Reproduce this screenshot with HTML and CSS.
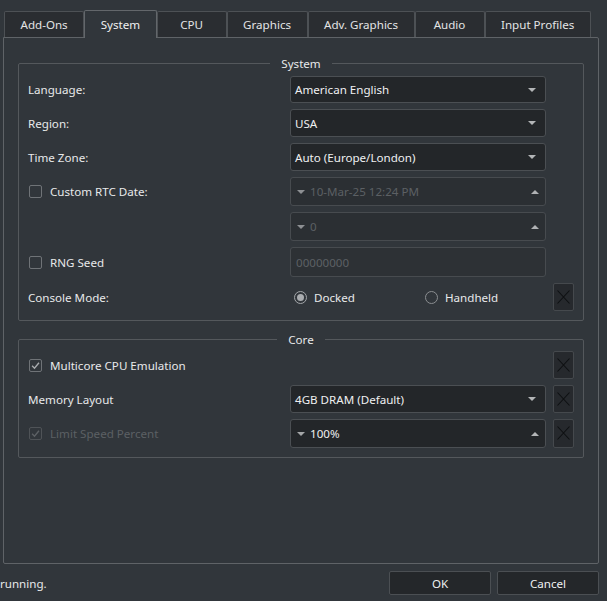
FILE: index.html
```html
<!DOCTYPE html>
<html>
<head>
<meta charset="utf-8">
<link rel="stylesheet" href="styles.css">
</head>
<body>
<div class="dialog">
  <div class="tabbar">
    <div class="tab">Add-Ons</div>
    <div class="tab selected">System</div>
    <div class="tab">CPU</div>
    <div class="tab">Graphics</div>
    <div class="tab">Adv. Graphics</div>
    <div class="tab">Audio</div>
    <div class="tab">Input Profiles</div>
  </div>
  <div class="pane">
    <fieldset class="group group-system">
      <legend>System</legend>
      <div class="rows rows-system">
        <div class="label">Language:</div>
        <div class="combo"><span>American English</span><i class="tri-down"></i></div>
        <div></div>

        <div class="label">Region:</div>
        <div class="combo"><span>USA</span><i class="tri-down"></i></div>
        <div></div>

        <div class="label">Time Zone:</div>
        <div class="combo"><span>Auto (Europe/London)</span><i class="tri-down"></i></div>
        <div></div>

        <div class="check"><span class="box"></span><span>Custom RTC Date:</span></div>
        <div class="spin disabled"><i class="tri-down small"></i><span class="spin-text">10-Mar-25 12:24 PM</span><i class="tri-up"></i></div>
        <div></div>

        <div></div>
        <div class="spin disabled"><i class="tri-down small"></i><span class="spin-text">0</span><i class="tri-up"></i></div>
        <div></div>

        <div class="check"><span class="box"></span><span>RNG Seed</span></div>
        <div class="lineedit disabled"><span>00000000</span></div>
        <div></div>

        <div class="label">Console Mode:</div>
        <div class="radios">
          <div class="radio"><span class="circle on"></span><span>Docked</span></div>
          <div class="radio"><span class="circle"></span><span>Handheld</span></div>
        </div>
        <div class="xbtn"><svg viewBox="0 0 21 27" width="21" height="27"><path d="M4.5 7.5 L16.5 20.5 M16.5 7.5 L4.5 20.5" /></svg></div>
      </div>
    </fieldset>

    <fieldset class="group group-core">
      <legend>Core</legend>
      <div class="rows rows-core">
        <div class="check"><span class="box checked"><svg viewBox="0 0 13 13" width="13" height="13"><path d="M2.5 6.8 L5.3 9.6 L10.6 3.2" /></svg></span><span>Multicore CPU Emulation</span></div>
        <div></div>
        <div class="xbtn"><svg viewBox="0 0 21 27" width="21" height="27"><path d="M4.5 7.5 L16.5 20.5 M16.5 7.5 L4.5 20.5" /></svg></div>

        <div class="label">Memory Layout</div>
        <div class="combo"><span>4GB DRAM (Default)</span><i class="tri-down"></i></div>
        <div class="xbtn"><svg viewBox="0 0 21 27" width="21" height="27"><path d="M4.5 7.5 L16.5 20.5 M16.5 7.5 L4.5 20.5" /></svg></div>

        <div class="check disabled-text"><span class="box checked dim"><svg viewBox="0 0 13 13" width="13" height="13"><path d="M2.5 6.8 L5.3 9.6 L10.6 3.2" /></svg></span><span>Limit Speed Percent</span></div>
        <div class="spin"><i class="tri-down small"></i><span class="spin-text">100%</span><i class="tri-up"></i></div>
        <div class="xbtn"><svg viewBox="0 0 21 27" width="21" height="27"><path d="M4.5 7.5 L16.5 20.5 M16.5 7.5 L4.5 20.5" /></svg></div>
      </div>
    </fieldset>
  </div>
  <div class="footer">
    <div class="status">running.</div>
    <div class="buttons">
      <button class="btn">OK</button>
      <button class="btn">Cancel</button>
    </div>
  </div>
</div>
</body>
</html>
```

FILE: styles.css
```css
* { box-sizing: border-box; }

html, body {
  margin: 0;
  padding: 0;
  background: #31363b;
}

body {
  font-family: "Noto Sans", "Open Sans", sans-serif;
  font-size: 11.6px;
  color: #e8e9ea;
  width: 607px;
  height: 601px;
  overflow: hidden;
}

.dialog {
  padding-top: 10px;
}

/* Tabs */
.tabbar {
  display: flex;
  align-items: flex-end;
  height: 27px;
  padding-left: 4px;
}

.tab {
  height: 26px;
  min-width: 70px;
  padding: 0 15.5px;
  display: flex;
  align-items: center;
  justify-content: center;
  background: #2a2d31;
  border: 1px solid #4d5155;
  border-bottom: none;
  border-radius: 2px 2px 0 0;
  color: #e3e4e5;
  white-space: nowrap;
}

.tab.selected {
  height: 28px;
  margin-bottom: -1px;
  background: #31363b;
  border-color: #63676b;
  position: relative;
  z-index: 1;
  color: #eff0f1;
}

/* Pane */
.pane {
  margin: 0 8px 0 3px;
  height: 527px;
  border: 1px solid #5f6367;
  border-radius: 0 2px 2px 2px;
  padding: 18px 14px 0 14px;
}

.group {
  margin: 0;
  border: 1px solid #54585c;
  border-radius: 2px;
  padding: 5px 9px 9px 9px;
  min-width: 0;
}

.group legend {
  margin: 0 auto;
  padding: 0 11px;
  line-height: 15px;
  color: #e8e9ea;
}

.group-core {
  margin-top: 11px;
  padding-top: 4px;
}

.rows {
  display: grid;
  grid-template-columns: 1fr 256px 21px;
  column-gap: 7px;
  row-gap: 6px;
  align-items: center;
}

.rows-system {
  grid-template-rows: 27px 28px 28px 29px 29px 30px 28px;
}

.rows-core {
  grid-template-rows: 28px 28px 29px;
}

.rows > * {
  height: 100%;
}

.label {
  display: flex;
  align-items: center;
}

/* Combo boxes */
.combo, .spin, .lineedit {
  display: flex;
  align-items: center;
  background: #232629;
  border: 1px solid #4b4f53;
  border-radius: 3px;
  color: #eff0f1;
}

.combo {
  padding: 0 9px 0 4px;
  justify-content: space-between;
}

.tri-down {
  display: block;
  width: 0;
  height: 0;
  border-left: 4px solid transparent;
  border-right: 4px solid transparent;
  border-top: 4px solid #b3b5b7;
}

.tri-down.small {
  border-top: 4px solid #a4a6a8;
}

.tri-up {
  display: block;
  width: 0;
  height: 0;
  border-left: 4px solid transparent;
  border-right: 4px solid transparent;
  border-bottom: 4px solid #b3b5b7;
}

.spin {
  padding: 0 6px 0 6px;
}

.spin-text {
  flex: 1;
  margin-left: 5px;
}

.disabled {
  background: #2b2f33;
  border-color: #474b4f;
  color: #5c6064;
}

.spin.disabled .tri-down.small { border-top-color: #8d9093; }
.spin.disabled .tri-up { border-bottom-color: #b0b2b4; }

.lineedit {
  padding: 0 5px;
}

.lineedit.disabled {
  background: #2d3135;
  color: #5c6064;
}

/* Checkboxes */
.check {
  display: flex;
  align-items: center;
  padding-left: 1px;
}

.check .box {
  width: 13px;
  height: 13px;
  border: 1px solid #6f7377;
  border-radius: 2px;
  margin-right: 8px;
  display: flex;
  align-items: center;
  justify-content: center;
  flex: none;
}

.check .box svg {
  display: block;
}

.check .box svg path {
  fill: none;
  stroke: #a9acaf;
  stroke-width: 1.6;
}

.check .box.dim {
  border-color: #4f5357;
}

.check .box.dim svg path {
  stroke: #5d6165;
}

.disabled-text {
  color: #5c6064;
}

/* Radios */
.radios {
  display: grid;
  grid-template-columns: 1fr 1fr;
  column-gap: 6px;
  align-items: center;
}

.radio {
  display: flex;
  align-items: center;
  padding-left: 4px;
}

.circle {
  width: 13px;
  height: 13px;
  border: 1px solid #8b8e91;
  border-radius: 50%;
  margin-right: 7px;
  display: flex;
  align-items: center;
  justify-content: center;
  flex: none;
}

.circle.on {
  border-color: #a3a6a9;
}

.circle.on::after {
  content: "";
  width: 7px;
  height: 7px;
  border-radius: 50%;
  background: #a9acaf;
}

/* X buttons */
.xbtn {
  background: #26292d;
  border: 1px solid #45494d;
  border-radius: 2px;
  overflow: hidden;
}

.xbtn svg {
  display: block;
  margin: -1px 0 0 -1px;
}

.xbtn svg path {
  stroke: #0e1012;
  stroke-width: 1.1;
  fill: none;
}

/* Footer */
.footer {
  display: flex;
  align-items: center;
  justify-content: space-between;
  margin-top: 7px;
  padding-right: 8px;
}

.status {
  color: #e8e9ea;
}

.buttons {
  display: flex;
  gap: 6px;
}

.btn {
  width: 102px;
  height: 24px;
  background: #24272a;
  border: 1px solid #4b4f53;
  border-radius: 2px;
  color: #eff0f1;
  font-family: inherit;
  font-size: inherit;
  padding: 0;
}
```
